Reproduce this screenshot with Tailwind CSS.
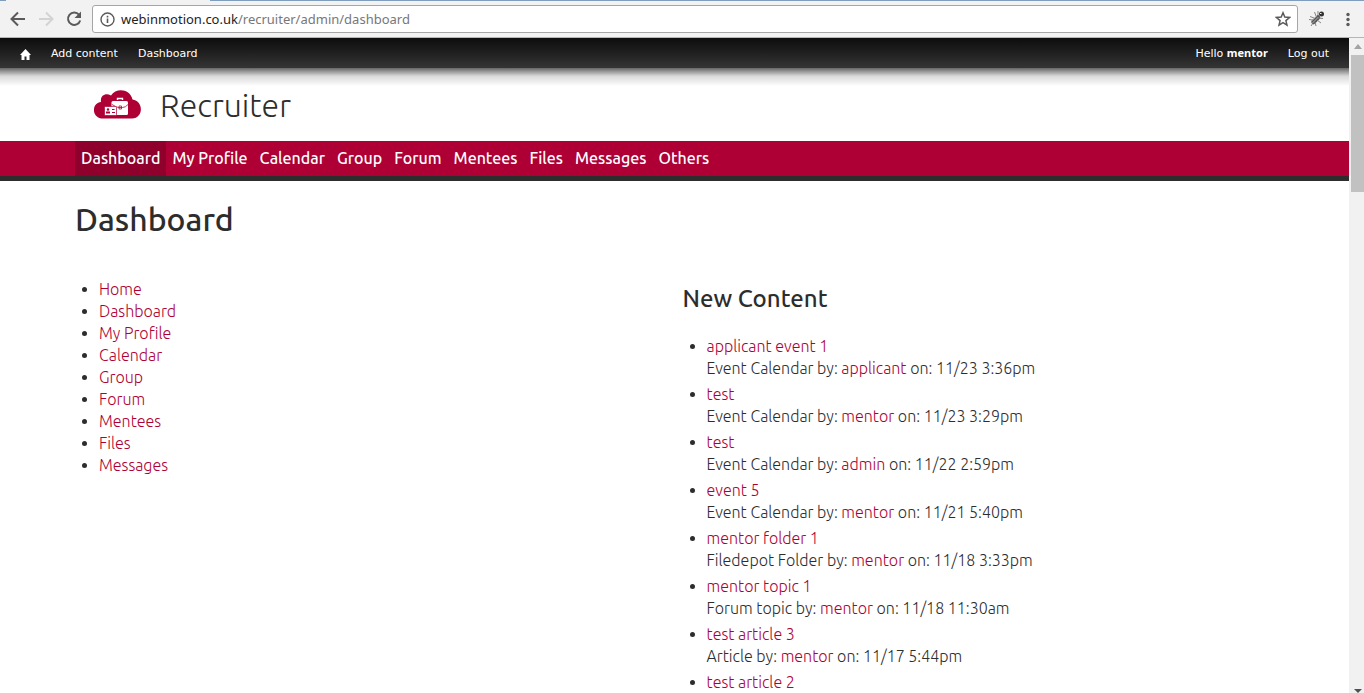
<!DOCTYPE html>
<html lang="en">
<head>
<meta charset="utf-8">
<meta name="viewport" content="width=device-width, initial-scale=1">
<title>Dashboard | Recruiter</title>
<script src="https://cdn.jsdelivr.net/npm/@tailwindcss/browser@4"></script>
</head>
<body class="flex h-screen flex-col overflow-hidden bg-white font-['Ubuntu','Noto_Sans',sans-serif] text-[16px] leading-[22px] font-light text-[#2d2d2d]">

<!-- Lower edge of the tab strip, open under the active tab -->
<div class="flex h-px shrink-0 bg-[#7f9dbd] pl-1.5"><div class="w-51 bg-[#f2f2f2]"></div></div>

<!-- Browser bar -->
<div class="flex h-[37px] shrink-0 items-center border-b border-b-[#b6b4b6] bg-[#f2f2f2] pl-[9px] font-['Noto_Sans',sans-serif] font-normal">
  <button aria-label="Back" class="mr-2.5"><svg class="size-[18px]" viewBox="0 0 18 18" fill="none" stroke="#5a5a5a" stroke-width="2"><path d="M16 9H3M9 2.500 2.500 9 9 15.500"/></svg></button>
  <button aria-label="Forward" class="mr-2.5" disabled><svg class="size-[18px]" viewBox="0 0 18 18" fill="none" stroke="#d3d3d3" stroke-width="2"><path d="M2 9h13M9 2.500 15.500 9 9 15.500"/></svg></button>
  <button aria-label="Reload" class="mr-[9px]"><svg class="size-[18px]" viewBox="0 0 18 18"><path d="M14 4.700A6.200 6.200 0 1 0 15.200 10.500" fill="none" stroke="#5a5a5a" stroke-width="2"/><path d="M16 1.500V8H9.500z" fill="#5a5a5a"/></svg></button>
  <div class="flex h-7 grow items-center rounded-[3px] border border-[#a6a6a6] bg-white px-1.5">
    <svg class="mr-1.5 ml-px size-[15px]" viewBox="0 0 15 15" fill="none" stroke="#5a5a5a"><circle cx="7.500" cy="7.500" r="6.500" stroke-width="1.400"/><path d="M7.500 6.500V11M7.500 3.800v1.600" stroke-width="1.600"/></svg>
    <a href="#" class="grow text-[13px] text-[#777]"><span class="text-[#222]">webinmotion.co.uk</span>/recruiter/admin/dashboard</a>
    <button aria-label="Bookmark this page"><svg class="size-4" viewBox="0 0 16 16" fill="none" stroke="#5a5a5a" stroke-width="1.500"><path d="m8 1.800 1.800 4.300 4.700.4-3.600 3.100 1.100 4.600L8 11.700l-4 2.500 1.100-4.600-3.600-3.100 4.700-.4z"/></svg></button>
  </div>
  <button aria-label="Debugger extension" class="ml-2.5"><svg class="size-[18px]" viewBox="0 0 18 18" fill="none" stroke="#777" stroke-width=".9"><path d="m5.500 12 4.500-4.500" stroke="#555" stroke-width="4.500" stroke-linecap="round"/><path d="m4.500 13 6-6M3.500 11l5-5" stroke="#bbb" stroke-width=".9"/><path d="M6 8 2 6.500M8 6 6.500 2M5 10l-4-.5M10 5V1M9 10l4 3M7 12l1 4M10 8l5 .5M5 13l-2 3"/><circle cx="13.500" cy="4" r="2.500" fill="#333" stroke="none"/><path d="M12 3.500h1.500" stroke="#fff"/></svg></button>
  <button aria-label="Menu" class="mr-3.5 ml-5"><svg class="h-[15px] w-1" viewBox="0 0 4 15" fill="#5a5a5a"><circle cx="2" cy="2.500" r="1.700"/><circle cx="2" cy="7.500" r="1.700"/><circle cx="2" cy="12.500" r="1.700"/></svg></button>
</div>

<div class="flex min-h-0 grow">
  <div class="flex min-w-0 grow flex-col overflow-hidden">

    <!-- Admin toolbar, with its shadow fading out below -->
    <div class="relative flex h-[30px] shrink-0 items-baseline bg-linear-to-b from-[#0d0d0d] to-[#353535] px-5 font-['DejaVu_Sans',sans-serif] text-[11px] leading-[30px] font-normal text-white">
      <a href="#" aria-label="Home" class="mr-5"><svg class="inline h-[11px] w-[11px]" viewBox="0 0 11 11" fill="#fff"><path d="M5.500 0 0 6h1.500v5h3V7.500h2V11h3V6H11z"/></svg></a>
      <a href="#" class="mr-5">Add content</a>
      <a href="#">Dashboard</a>
      <a href="#" class="mr-5 ml-auto">Hello <strong class="font-['Noto_Sans',sans-serif] font-bold">mentor</strong></a>
      <a href="#">Log out</a>
      <div class="absolute inset-x-0 top-full h-[18px] bg-linear-to-b from-black/60 via-black/15 via-45% to-transparent"></div>
    </div>

    <header class="flex h-[73px] shrink-0 items-center px-[94px]">
      <a href="#" class="flex items-center text-[32px] leading-9">
        <svg class="mr-[19px] h-[30px] w-[47px]" viewBox="0 0 47 30">
          <path fill="#ae0034" d="M9 28.500C-2.500 28.500-3 13 7 12 6 5 12 2.500 17 5.500 22-2.500 36-1.500 38.500 9.500 50 11 49.500 28.500 38 28.500z"/>
          <path d="M23.500 10V8.500h5V10" fill="none" stroke="#fff" stroke-width="1.400"/>
          <rect x="17.500" y="11" width="16.500" height="14" rx="1.500" fill="#fff"/>
          <path d="M18 14.500q5 3 6.500 3h4q3 0 5.500-3M25 16h2.500v3H25z" fill="none" stroke="#ae0034" stroke-width=".8"/>
          <rect x="10.500" y="16.500" width="12" height="9" rx="1" fill="#fff" stroke="#ae0034" stroke-width=".7"/>
          <circle cx="14" cy="19.500" r="1.200" fill="#ae0034"/><path d="M12 23.500v-2h4v2zM18 19h2.500v1H18zM18 22h3v1h-3z" fill="#ae0034"/>
        </svg>
        Recruiter
      </a>
    </header>

    <nav class="flex h-10 shrink-0 border-b-[5px] border-[#2d2d2d] bg-[#ae0034] px-[75px] leading-[35px] font-medium whitespace-nowrap text-white">
      <a href="#" class="bg-[#8f002c] px-1.5">Dashboard</a>
      <a href="#" class="px-1.5">My Profile</a>
      <a href="#" class="px-1.5">Calendar</a>
      <a href="#" class="px-1.5">Group</a>
      <a href="#" class="px-1.5">Forum</a>
      <a href="#" class="px-1.5">Mentees</a>
      <a href="#" class="px-1.5">Files</a>
      <a href="#" class="px-1.5">Messages</a>
      <a href="#" class="px-1.5">Others</a>
    </nav>

    <main class="px-[75px]">
      <h1 class="mt-[18px] text-[32px] leading-10 font-medium">Dashboard</h1>
      <div class="mt-[39px] grid grid-cols-2 gap-4">
        <ul class="list-disc pl-6 text-[#ae0034] marker:text-[#2d2d2d]">
          <li><a href="#">Home</a></li>
          <li><a href="#">Dashboard</a></li>
          <li><a href="#">My Profile</a></li>
          <li><a href="#">Calendar</a></li>
          <li><a href="#">Group</a></li>
          <li><a href="#">Forum</a></li>
          <li><a href="#">Mentees</a></li>
          <li><a href="#">Files</a></li>
          <li><a href="#">Messages</a></li>
        </ul>
        <section>
          <h2 class="mt-[5px] mb-5 text-[24px] leading-8 font-medium">New Content</h2>
          <ul class="list-disc space-y-1 pl-6">
            <li><a href="#" class="text-[#ae0034]">applicant event 1</a><br>Event Calendar by: <a href="#" class="text-[#ae0034]">applicant</a> on: 11/23 3:36pm</li>
            <li><a href="#" class="text-[#ae0034]">test</a><br>Event Calendar by: <a href="#" class="text-[#ae0034]">mentor</a> on: 11/23 3:29pm</li>
            <li><a href="#" class="text-[#ae0034]">test</a><br>Event Calendar by: <a href="#" class="text-[#ae0034]">admin</a> on: 11/22 2:59pm</li>
            <li><a href="#" class="text-[#ae0034]">event 5</a><br>Event Calendar by: <a href="#" class="text-[#ae0034]">mentor</a> on: 11/21 5:40pm</li>
            <li><a href="#" class="text-[#ae0034]">mentor folder 1</a><br>Filedepot Folder by: <a href="#" class="text-[#ae0034]">mentor</a> on: 11/18 3:33pm</li>
            <li><a href="#" class="text-[#ae0034]">mentor topic 1</a><br>Forum topic by: <a href="#" class="text-[#ae0034]">mentor</a> on: 11/18 11:30am</li>
            <li><a href="#" class="text-[#ae0034]">test article 3</a><br>Article by: <a href="#" class="text-[#ae0034]">mentor</a> on: 11/17 5:44pm</li>
            <li><a href="#" class="text-[#ae0034]">test article 2</a></li>
          </ul>
        </section>
      </div>
    </main>
  </div>

  <!-- Scrollbar -->
  <div class="flex w-[15px] shrink-0 flex-col items-center bg-[#f1f1f1] pl-0.5">
    <svg class="my-1.5 h-[5px] w-2 shrink-0" viewBox="0 0 8 5" fill="#a3a3a3"><path d="M4 0 8 5H0z"/></svg>
    <div class="h-[137px] w-full bg-[#c1c1c1]"></div>
    <svg class="mt-auto h-1 w-2" viewBox="0 0 8 4" fill="#505050"><path d="M0 0h8L4 4z"/></svg>
  </div>
</div>
</body>
</html>
